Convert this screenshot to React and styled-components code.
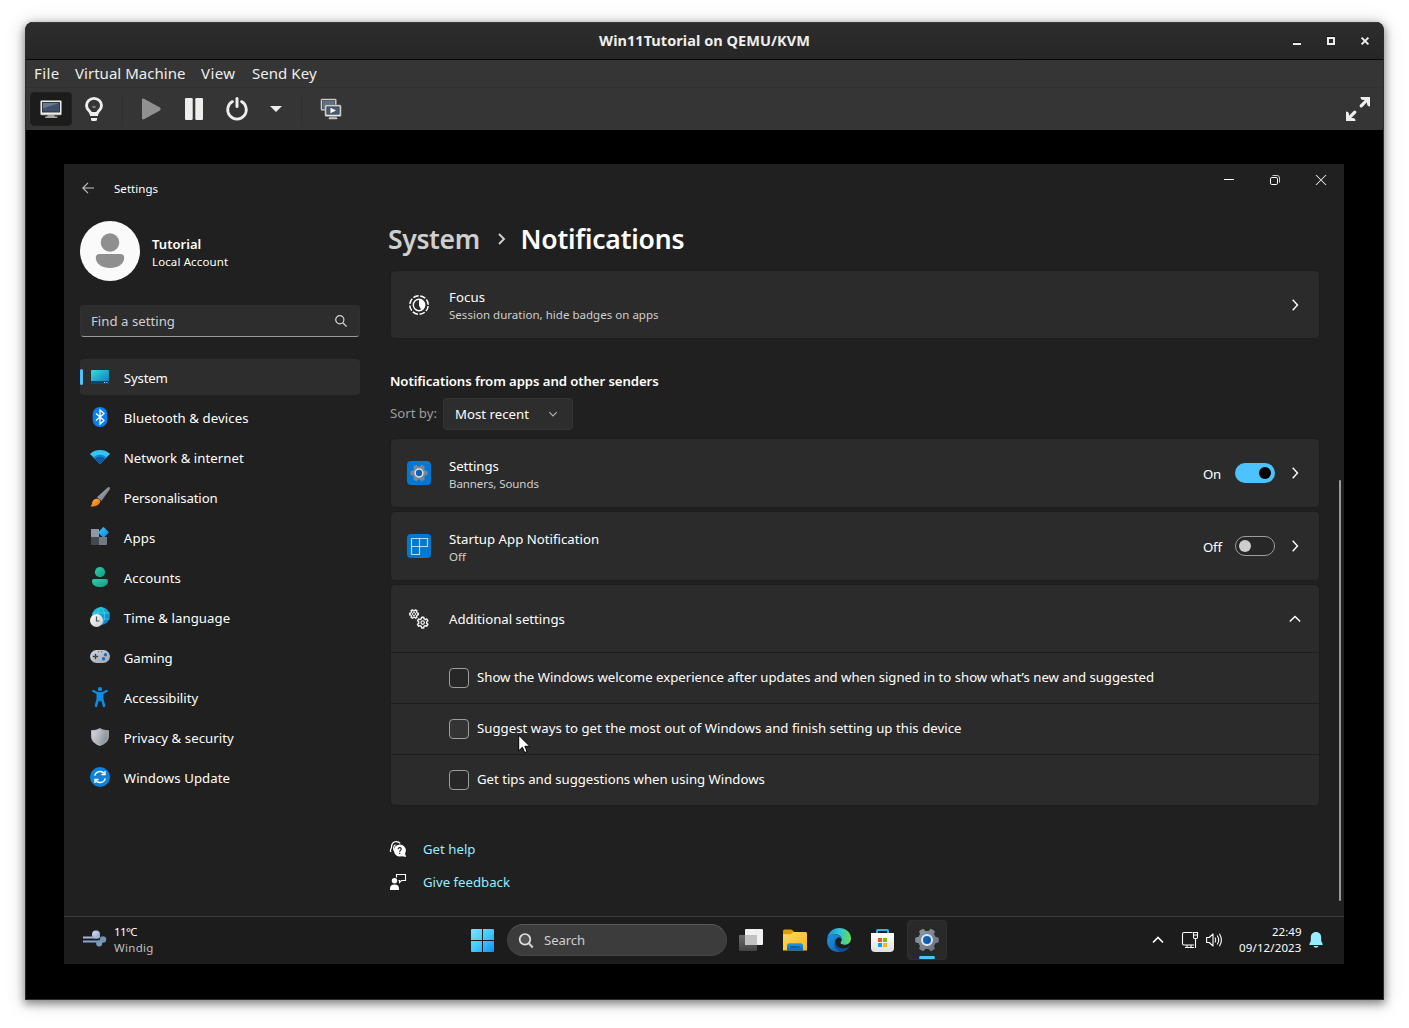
import React from "react";
import styled, { createGlobalStyle, css } from "styled-components";

const Global = createGlobalStyle`
  * { box-sizing: border-box; }
  html, body { margin: 0; background: #fff; }
  body { font-family: "Noto Sans", "Open Sans", sans-serif; overflow: hidden; }
  svg { display: block; flex: none; overflow: visible; }
`;

/* ---------- text ---------- */

const Text = styled.span`
  display: block;
  white-space: nowrap;
  font-size: ${(p) => p.$size || 13.2}px;
  line-height: ${(p) => p.$line || 20}px;
  font-weight: ${(p) => p.$weight || 400};
  letter-spacing: ${(p) => p.$track || 0}px;
  color: ${(p) => p.$color || "#fff"};
`;

/* ---------- host window ---------- */

const Page = styled.div`
  width: 1409px;
  height: 1028px;
  padding: 22px 25px 28px;
  background: #fff;
`;

const HostWindow = styled.div`
  width: 1359px;
  height: 978px;
  display: flex;
  flex-direction: column;
  background: #000;
  border: 1px solid #2b2d2d;
  border-top: 0;
  border-radius: 8px 8px 0 0;
  overflow: hidden;
  box-shadow: 0 3px 9px 1px rgba(0, 0, 0, 0.42), 0 2px 20px 2px rgba(0, 0, 0, 0.13);
`;

const HostTitlebar = styled.header`
  height: 38px;
  flex: none;
  display: grid;
  grid-template-columns: 1fr auto 1fr;
  align-items: center;
  background: linear-gradient(#2d2d2d, #262626);
  box-shadow: inset 0 1px #3a3a3a;
  border-bottom: 1px solid #070707;
`;

const HostTitle = styled(Text)`
  padding-bottom: 1px;
`;

const HostControls = styled.div`
  display: flex;
  justify-content: flex-end;
  gap: 20px;
  padding-right: 11px;
`;

const MenuBar = styled.nav`
  height: 28px;
  flex: none;
  display: flex;
  align-items: center;
  padding: 0 0 1px 8px;
  background: #353535;
  border-bottom: 1px solid #303030;
`;

const MenuItem = styled(Text)`
  width: ${(p) => p.$width}px;
`;

const HostToolbar = styled.div`
  height: 42px;
  flex: none;
  display: flex;
  align-items: center;
  padding: 0 9px 0 4px;
  background: #353535;
`;

const ToolButton = styled.div`
  width: ${(p) => p.$width || 42}px;
  height: 34px;
  flex: none;
  display: grid;
  place-items: center;
  border-radius: 5px;
  background: ${(p) => (p.$pressed ? "#1c1c1c" : "transparent")};
  box-shadow: ${(p) => (p.$pressed ? "inset 0 0 0 1px #202020" : "none")};
`;

const ToolDivider = styled.div`
  width: 1px;
  height: 34px;
  margin: 0 ${(p) => p.$right}px 0 ${(p) => p.$left}px;
  background: #2f2f2f;
`;

const Grow = styled.div`
  flex: 1;
`;

const Viewport = styled.div`
  flex: 1;
  padding: 34px 38px 35px;
  background: #000;
`;

/* ---------- guest desktop ---------- */

const Desktop = styled.div`
  width: 1280px;
  height: 800px;
  display: flex;
  flex-direction: column;
  background: #202020;
`;

const SettingsWindow = styled.div`
  height: 752px;
  display: flex;
  flex-direction: column;
`;

const AppTitlebar = styled.header`
  height: 48px;
  flex: none;
  display: flex;
  align-items: flex-start;
`;

const AppTitle = styled.div`
  height: 48px;
  display: flex;
  align-items: center;
  gap: 20px;
  padding-left: 18px;
  flex: 1;
`;

const AppName = styled(Text)`
  padding-top: 2px;
`;

const CaptionButton = styled.div`
  width: 46px;
  height: 32px;
  display: grid;
  place-items: center;
`;

const Body = styled.div`
  flex: 1;
  display: flex;
  min-height: 0;
`;

const Sidebar = styled.aside`
  width: 296px;
  flex: none;
  padding: 9px 0 0 16px;
`;

const Profile = styled.div`
  display: flex;
  align-items: center;
  gap: 12px;
  height: 60px;
`;

const ProfileText = styled.div`
  display: flex;
  flex-direction: column;
  padding-top: 4px;
`;

const SearchField = styled.div`
  height: 32px;
  margin-top: 24px;
  padding: 0 12px 0 10px;
  display: flex;
  align-items: center;
  justify-content: space-between;
  background: #2d2d2d;
  border: 1px solid #303030;
  border-bottom: 1px solid #9a9a9a;
  border-radius: 4px;
`;

const NavList = styled.nav`
  margin-top: 22px;
  display: flex;
  flex-direction: column;
  gap: 4px;
`;

const NavItem = styled.div`
  height: 36px;
  display: flex;
  align-items: center;
  border-radius: 4px;
  background: ${(p) => (p.$active ? "#2d2d2d" : "transparent")};
`;

const NavMarker = styled.div`
  width: 3px;
  height: 16px;
  margin-right: 7px;
  border-radius: 2px;
  background: ${(p) => (p.$active ? "#4cc2ff" : "transparent")};
`;

const NavLabel = styled(Text)`
  padding: 2px 0 0 13.8px;
`;

const Main = styled.main`
  flex: 1;
  display: flex;
  flex-direction: column;
  padding: 9px 0 0 30px;
`;

const Breadcrumb = styled.div`
  height: 36px;
  margin-left: -2px;
  display: flex;
  align-items: center;
`;

const Crumb = styled(Text)`
  width: ${(p) => p.$width}px;
  margin-left: ${(p) => p.$indent || 0}px;
  padding-bottom: 1px;
`;

const Card = styled.section`
  margin-top: ${(p) => p.$gap}px;
  background: #2b2b2b;
  border: 1px solid #1d1d1d;
  border-radius: 5px;
`;

const CardRow = styled.div`
  height: ${(p) => p.$height || 68}px;
  display: flex;
  align-items: center;
  padding: 0 18px 0 16px;
`;

const CardIcon = styled.div`
  width: 24px;
  height: 24px;
  margin-right: 18px;
  display: grid;
  place-items: center;
`;

const CardText = styled.div`
  flex: 1;
  padding-top: ${(p) => p.$shift || 0}px;
`;

const State = styled(Text)`
  width: 32px;
  padding-top: 2px;
`;

const Toggle = styled.div`
  width: 40px;
  height: 20px;
  margin-right: 14px;
  padding: 0 ${(p) => (p.$on ? 4 : 3)}px;
  display: flex;
  align-items: center;
  justify-content: ${(p) => (p.$on ? "flex-end" : "flex-start")};
  border-radius: 10px;
  ${(p) =>
    p.$on
      ? css`
          background: #4cc2ff;
        `
      : css`
          background: #272727;
          border: 1px solid #9d9d9d;
        `}
`;

const Knob = styled.div`
  width: 12px;
  height: 12px;
  border-radius: 50%;
  background: ${(p) => (p.$on ? "#000" : "#cecece")};
`;

const SectionTitle = styled(Text)`
  margin-top: 32px;
`;

const SortRow = styled.div`
  height: 32px;
  margin-top: 7px;
  display: flex;
`;

const SortLabel = styled(Text)`
  width: 53px;
  padding-top: 5px;
`;

const Select = styled.div`
  width: 130px;
  height: 32px;
  padding: 0 13px 0 11px;
  display: flex;
  align-items: center;
  justify-content: space-between;
  background: #2d2d2d;
  border: 1px solid #353535;
  border-radius: 4px;
`;

const OptionRow = styled.div`
  height: 51px;
  display: flex;
  align-items: center;
  gap: 8px;
  padding-left: 58px;
  border-top: 1px solid #1d1d1d;
`;

const Checkbox = styled.div`
  width: 20px;
  height: 20px;
  border: 1px solid #9d9d9d;
  border-radius: 4px;
  background: ${(p) => (p.$hover ? "#343434" : "#272727")};
`;

const OptionText = styled(Text)`
  padding-bottom: 2px;
`;

const Links = styled.div`
  margin-top: 33px;
  display: flex;
  flex-direction: column;
  gap: 13px;
`;

const LinkRow = styled.div`
  height: 20px;
  display: flex;
  align-items: center;
  gap: 17px;
`;

const ScrollGutter = styled.div`
  width: 24px;
  flex: none;
  padding: 268px 0 0 19px;
`;

const ScrollThumb = styled.div`
  width: 2px;
  height: 421px;
  border-radius: 1px;
  background: #9a9a9a;
`;

const Cursor = styled.div`
  position: absolute;
  left: 518px;
  top: 734px;
`;

/* ---------- taskbar ---------- */

const Taskbar = styled.footer`
  height: 48px;
  display: flex;
  align-items: center;
  padding-bottom: 1px;
  background: #1c1c1c;
  border-top: 1px solid #3d3d3d;
`;

const Weather = styled.div`
  width: 407px;
  display: flex;
  align-items: center;
  gap: 7px;
  padding-left: 19px;
`;

const WeatherIcon = styled.div`
  margin-top: -3px;
`;

const SearchPill = styled.div`
  width: 220px;
  height: 32px;
  margin: 0 12px 0 13px;
  display: flex;
  align-items: center;
  gap: 11px;
  padding-left: 11px;
  background: #3c3c3c;
  border: 1px solid #454545;
  border-top-color: #5a5a5a;
  border-radius: 16px;
`;

const Pinned = styled.div`
  display: flex;
  align-items: center;
  gap: 20px;
`;

const RunningApp = styled.div`
  width: 40px;
  height: 40px;
  margin-left: -8px;
  display: flex;
  flex-direction: column;
  align-items: center;
  padding-top: 7px;
  background: #292929;
  border: 1px solid #303030;
  border-radius: 4px;
`;

const RunningMark = styled.div`
  width: 16px;
  height: 3px;
  margin-top: 4px;
  border-radius: 2px;
  background: #4cc2ff;
`;

const Tray = styled.div`
  flex: 1;
  display: flex;
  align-items: center;
  justify-content: flex-end;
  padding-right: 21px;
`;

const TrayIcon = styled.div`
  margin-right: ${(p) => p.$gap}px;
`;

const Clock = styled.div`
  width: 79.5px;
  margin-right: 7.5px;
  display: flex;
  flex-direction: column;
  align-items: flex-end;
`;

/* ---------- icons ---------- */

function gearPath(cx, cy, outer, inner, teeth, tip, root, turn = 0) {
  const step = (Math.PI * 2) / teeth;
  const pts = [];
  for (let i = 0; i < teeth; i++) {
    const a = i * step + turn;
    [
      [inner, -root],
      [outer, -tip],
      [outer, tip],
      [inner, root],
    ].forEach(([r, f]) => pts.push(`${(cx + r * Math.cos(a + f * step)).toFixed(2)} ${(cy + r * Math.sin(a + f * step)).toFixed(2)}`));
  }
  return `M${pts.join("L")}Z`;
}

const Svg = ({ w = 20, h = w, vb, children, ...rest }) => (
  <svg width={w} height={h} viewBox={vb || `0 0 ${w} ${h}`} fill="none" {...rest}>
    {children}
  </svg>
);

const Grad = ({ id, from, to, x2 = 1, y2 = 1 }) => (
  <linearGradient id={id} x1="0" y1="0" x2={x2} y2={y2}>
    <stop stopColor={from} />
    <stop offset="1" stopColor={to} />
  </linearGradient>
);

const HostMinimize = () => (
  <Svg w={14}><path d="M3 9h8v2H3z" fill="#eee" /><path d="M3 8h8v1H3z" fill="#111" /></Svg>
);
const HostMaximize = () => (
  <Svg w={14}><path d="M3 2h8v1H3z" fill="#111" /><path d="M4 4h6v6H4z" stroke="#eee" strokeWidth="2" /></Svg>
);
const HostClose = () => (
  <Svg w={14}><path d="M3.6 3.6l6.8 6.8M10.4 3.6l-6.8 6.8" stroke="#eee" strokeWidth="2" /></Svg>
);

const ConsoleIcon = () => (
  <Svg w={24}>
    <path d="M9 18h6l1.5 2.2h-9z" fill="#a5a5a2" />
    <rect x="6" y="19.500" width="12.5" height="1.6" rx=".8" fill="#a5a5a2" />
    <rect x="1.5" y="3.5" width="21" height="14.500" rx="1.2" fill="#ecece9" stroke="#8c8c89" strokeWidth=".7" />
    <rect x="3.500" y="5.500" width="17" height="9.500" fill="#3f5068" stroke="#252e3b" strokeWidth=".9" />
    <path d="M4 6h16L4 11.500z" fill="#687a92" />
  </Svg>
);
const BulbIcon = () => (
  <Svg w={24}>
    <path d="M8.700 16.500c0-2.300-4.200-3.600-4.200-7.900a7.500 7.200 0 0 1 15 0c0 4.300-4.200 5.600-4.200 7.900z" stroke="#eeeeec" strokeWidth="2.900" strokeLinejoin="round" />
    <path d="M9.500 8.200l1.200 1.300 1.300-.9 1.300.9 1.200-1.300-1.300 2.900h-2.400z" fill="#858585" />
    <path d="M8 17h8v2H8z" fill="#eeeeec" />
    <path d="M9 21h6v1.400q0 1.600-1.600 1.600h-2.800Q9 24 9 22.400z" fill="#eeeeec" />
  </Svg>
);
const PlayIcon = () => (
  <Svg w={20} h={22}><path d="M1 2Q1 0 3 .8L19 9.500Q20.500 11 19 12.500L3 21.200Q1 22 1 20z" fill="#909090" /></Svg>
);
const PauseIcon = () => (
  <Svg w={18} h={22}><rect width="7.700" height="22" rx="1.300" fill="#eeeeec" /><rect x="10.300" width="7.700" height="22" rx="1.300" fill="#eeeeec" /></Svg>
);
const PowerIcon = () => (
  <Svg w={22} h={24}>
    <path d="M6.500 4.600a9.300 9.300 0 1 0 9 0" stroke="#eeeeec" strokeWidth="2.800" strokeLinecap="round" />
    <path d="M11 1.500v8" stroke="#eeeeec" strokeWidth="3" strokeLinecap="round" />
  </Svg>
);
const CaretIcon = () => (
  <Svg w={12} h={6}><path d="M0 0h12L6 6z" fill="#eeeeec" /></Svg>
);
const SnapshotsIcon = () => (
  <Svg w={22}>
    <rect x=".9" y=".9" width="15.500" height="11.500" rx="1" fill="#e4e4e1" stroke="#8a8a88" strokeWidth=".6" />
    <rect x="2.500" y="2.500" width="12.300" height="8.300" fill="#607088" stroke="#303a48" strokeWidth=".7" />
    <path d="M10 18h6l1 2H9z" fill="#9c9c99" />
    <rect x="8.500" y="19.800" width="9" height="1.400" rx=".7" fill="#c8c8c5" />
    <rect x="4.900" y="6.900" width="16.200" height="11.500" rx="1" fill="#eeeeeb" stroke="#777" strokeWidth=".7" />
    <rect x="6.800" y="8.800" width="12.400" height="7.400" fill="#4a5a70" stroke="#2f3946" strokeWidth=".7" />
    <path d="M10.500 9.800l5.500 2.700-5.500 2.700z" fill="#fff" />
  </Svg>
);
const FullscreenIcon = () => (
  <Svg w={24}>
    <path
      d="M14.500 0H24v9.500q-3 0-3-3V5.200l-4.600 4.900q-1.300 1-2.400 0-1-1.200 0-2.400L18.800 3h-1.500q-2.800 0-2.800-3zM9.500 24H0v-9.500q3 0 3 3v1.300l4.600-4.900q1.300-1 2.400 0 1 1.200 0 2.400L5.200 21h1.500q2.800 0 2.800 3z"
      fill="#eeeeec"
    />
  </Svg>
);

const BackIcon = () => (
  <Svg w={12}><path d="M12 6H.8M6 .8L.8 6 6 11.200" stroke="#c4c4c4" strokeWidth="1.100" /></Svg>
);
const MinimizeIcon = () => (<Svg w={10}><path d="M0 4.500h10" stroke="#fff" /></Svg>);
const RestoreIcon = () => (
  <Svg w={10}>
    <rect x=".5" y="2.500" width="7" height="7" rx="1.300" stroke="#fff" />
    <path d="M2.500 .5h4.500q2.500 0 2.500 2.500v4.500" stroke="#ccc" />
  </Svg>
);
const CloseIcon = () => (<Svg w={10}><path d="M0 0l10 10M10 0L0 10" stroke="#e6e6e6" strokeWidth="1.050" /></Svg>);
const Avatar = () => (
  <Svg w={60}>
    <circle cx="30" cy="30" r="30" fill="#fafafa" />
    <circle cx="30" cy="21.500" r="9.300" fill="#8f8f8f" />
    <path d="M19.500 33h21q3.700 0 3.700 3.700c0 6.500-6.500 10.300-14.200 10.300s-14.200-3.800-14.200-10.300q0-3.700 3.700-3.700z" fill="#8f8f8f" />
  </Svg>
);
const Magnifier = () => (
  <Svg w={12}><circle cx="4.800" cy="4.800" r="4.100" stroke="#d6d6d6" strokeWidth="1.200" /><path d="M7.800 7.800l3.800 3.800" stroke="#d6d6d6" strokeWidth="1.300" /></Svg>
);

const SystemIcon = () => (
  <Svg>
    <defs><Grad id="sys" from="#34dbe2" to="#0f74c0" /></defs>
    <rect x="1" y="3" width="18" height="14" rx="1" fill="url(#sys)" />
    <path d="M1 14h18v2q0 1-1 1H2q-1 0-1-1z" fill="#0c4668" />
    <path d="M14 15h1v1h-1zM16.300 15h1v1h-1z" fill="#9fe0f5" />
  </Svg>
);
const BluetoothIcon = () => (
  <Svg>
    <rect x="2.700" y="0" width="14.600" height="20" rx="7" fill="#0a7df2" />
    <path d="M6 6.500l8 7-4 3.500V3l4 3.500-8 7" stroke="#fff" strokeWidth="1.300" />
  </Svg>
);
const NetworkIcon = () => (
  <Svg>
    <path d="M10 17L.3 7.200Q0 6.800.4 6.400C5.700 1.900 14.300 1.900 19.600 6.400q.4.400.1.800z" fill="#32c5f4" />
    <path d="M10 17L3.500 10.300c3.800-3.300 9.200-3.300 13 0z" fill="#1683d8" />
    <path d="M10 17L4.800 11.700c3-2.500 7.400-2.500 10.400 0z" fill="#0c59a4" />
  </Svg>
);
const BrushIcon = () => (
  <Svg>
    <defs><Grad id="br" from="#b9bec4" to="#5e666e" /><Grad id="br2" from="#ffc23a" to="#ec5f12" /></defs>
    <path d="M19.500.3Q20.500 1 19.600 2.500L11.500 14 7 10.300 17.500.7Q18.700-.2 19.500.3z" fill="url(#br)" />
    <path d="M8.300 12c2 .8 2.300 2.600 1.400 4.100C8.300 18.900 4 20.300.3 19.200c1.800-.7 1.500-2.600 2-4 .8-2.800 3.600-4.300 6-3.200z" fill="url(#br2)" />
  </Svg>
);
const AppsIcon = () => (
  <Svg>
    <defs><Grad id="ap" from="#3ccaff" to="#0a7fe0" /></defs>
    <path d="M1 2h8v8H1z" fill="#9198a1" /><path d="M1 10h8v8H2q-1 0-1-1z" fill="#44494f" /><path d="M9 10h8v7q0 1-1 1H9z" fill="#747a84" />
    <path d="M13.900.2l4.700 4.800q.4.400 0 .8l-4.700 4.800q-.4.400-.8 0L8.400 5.800q-.4-.4 0-.8L13.100.2q.4-.4.8 0z" fill="url(#ap)" />
  </Svg>
);
const AccountIcon = () => (
  <Svg>
    <defs><Grad id="ac" from="#2bd0b0" to="#119c7f" /></defs>
    <circle cx="10" cy="5.200" r="5.100" fill="url(#ac)" />
    <path d="M4 12h12q2 0 2 2c0 4-3.500 6-8 6s-8-2-8-6q0-2 2-2z" fill="url(#ac)" />
  </Svg>
);
const TimeIcon = () => (
  <Svg>
    <defs><Grad id="ti" from="#25d4da" to="#0873cc" /><Grad id="ti2" from="#fff" to="#c9cacc" /></defs>
    <circle cx="11" cy="9" r="9" fill="url(#ti)" />
    <path d="M2.500 6h17M2.500 12h17M11 0c-5 5-5 13 0 18M11 0c5 5 5 13 0 18" stroke="#50e0f2" strokeWidth=".9" opacity=".65" />
    <circle cx="6.500" cy="13.500" r="6.500" fill="url(#ti2)" />
    <path d="M6.500 9.500v4.500h3" stroke="#505050" strokeWidth="1.200" />
  </Svg>
);
const GamingIcon = () => (
  <Svg>
    <defs><Grad id="ga" from="#d4d8df" to="#9ca2ab" /></defs>
    <rect x="0" y="3" width="20" height="13" rx="6.500" fill="url(#ga)" />
    <path d="M5.500 6.800v5.400M2.800 9.500h5.400" stroke="#3c4045" strokeWidth="1.300" />
    <path d="M8 4.200h1.200v1H8zM11 4.200h1.200v1H11z" fill="#505a64" />
    <circle cx="15.500" cy="7.800" r="1.700" fill="#0b71cf" /><circle cx="13.500" cy="11.700" r="1.700" fill="#0b71cf" />
  </Svg>
);
const AccessibilityIcon = () => (
  <Svg>
    <g stroke="#0f8be0" strokeLinecap="round" strokeLinejoin="round">
      <circle cx="10" cy="2.200" r="2.100" fill="#0f8be0" stroke="none" />
      <path d="M3.200 3.900L7.800 6.200h4.400l4.600-2.300" strokeWidth="2.200" />
      <path d="M7.800 6v6.200L6 18.800M12.200 6v6.200l1.800 6.600" strokeWidth="2.600" />
      <path d="M8 6h4v7l-2 1-2-1z" fill="#0f8be0" strokeWidth="1" />
    </g>
  </Svg>
);
const ShieldIcon = () => (
  <Svg>
    <defs><Grad id="sh" from="#d5d8dc" to="#a2a7ae" /><Grad id="sh2" from="#b9bdc3" to="#7d838b" /></defs>
    <path d="M10 1C7.500 2.700 4.500 3.200 1 3.200V9c0 5 4 8.200 9 10z" fill="#b9bdc3" />
    <path d="M10 1c2.500 1.700 5.500 2.200 9 2.200V9c0 5-4 8.200-9 10z" fill="#9ba0a8" />
    <path d="M10 2.500C8 3.800 5.500 4.300 2.500 4.400V9c0 4 3.300 6.800 7.500 8.500z" fill="url(#sh)" />
    <path d="M10 2.500c2 1.300 4.500 1.800 7.500 1.900V9c0 4-3.300 6.800-7.500 8.500z" fill="url(#sh2)" />
  </Svg>
);
const UpdateIcon = () => (
  <Svg>
    <circle cx="10" cy="10" r="10" fill="#0b82dc" />
    <path d="M4.700 8.700a5.500 5.500 0 0 1 9.600-2.200M15.300 11.300a5.500 5.500 0 0 1-9.600 2.200" stroke="#fff" strokeWidth="1.400" />
    <path d="M15 4v3.500h-3.600M5 16v-3.500h3.600" stroke="#fff" strokeWidth="1.400" />
  </Svg>
);

const Chevron = ({ dir }) => {
  const d = {
    right: "M3.700 .8L8.500 6 3.700 11.200",
    up: "M.8 8.600L6 3.400l5.200 5.200",
    down: "M2.300 4.200L6 7.900l3.700-3.700",
  }[dir];
  return <Svg w={12}><path d={d} stroke={dir === "down" ? "#b5b5b5" : "#fff"} strokeWidth={dir === "down" ? 1.1 : 1.4} /></Svg>;
};
const CrumbChevron = () => (<Svg w={8} h={12}><path d="M1 1l5 5-5 5" stroke="#cfcfcf" strokeWidth="1.900" /></Svg>);

const FocusIcon = () => (
  <Svg>
    <circle cx="10" cy="10" r="9.200" stroke="#fff" strokeWidth="1.500" strokeDasharray="5.600 1.625" strokeDashoffset="-1" />
    <circle cx="10" cy="10" r="5.700" stroke="#fff" strokeWidth="1.400" />
    <path d="M10 4.500v6l2.300 4.500a5.500 5.500 0 0 0-2.300-10.500z" fill="#fff" />
  </Svg>
);
const GearGlyph = ({ w }) => (
  <Svg w={w} vb="0 0 24 24">
    <defs><Grad id="gr" from="#8e9aa5" to="#67717b" /><Grad id="gb" from="#0b6cc8" to="#0a539e" /></defs>
    <path d={gearPath(12, 12, 11, 8.3, 6, 0.15, 0.27)} fill="url(#gr)" stroke="url(#gr)" strokeWidth="1.800" strokeLinejoin="round" />
    <circle cx="12" cy="12" r="5" fill="url(#gb)" stroke="#e2e6ea" strokeWidth="2" />
  </Svg>
);
const SettingsTile = () => (
  <Svg w={24}>
    <rect width="24" height="24" rx="4" fill="#0078d4" />
    <path d={gearPath(12, 12, 8, 6, 6, 0.15, 0.27)} fill="#7d8791" stroke="#7d8791" strokeWidth="1.500" strokeLinejoin="round" />
    <circle cx="12" cy="12" r="3.900" fill="#0d62b4" stroke="#dbe2e8" strokeWidth="1.500" />
  </Svg>
);
const StartupTile = () => (
  <Svg w={24}>
    <rect width="24" height="24" rx="4" fill="#0078d4" />
    <path d="M4.500 4.500h16v8h-8v8h-8zM12.500 4.500v8M4.500 12.500h8" stroke="#b8daf5" strokeWidth="1.200" strokeLinejoin="round" />
  </Svg>
);
const GearsIcon = () => (
  <Svg>
    <path d={gearPath(5, 5, 4.4, 3.3, 6, 0.2, 0.3, 0)} stroke="#eee" strokeWidth="1.400" strokeLinejoin="round" />
    <circle cx="5" cy="5" r="1.500" stroke="#eee" strokeWidth="1" />
    <path d={gearPath(13.7, 13.6, 5.500, 4.100, 6, 0.18, 0.3, Math.PI / 6)} stroke="#eee" strokeWidth="1.500" strokeLinejoin="round" />
    <circle cx="13.700" cy="13.600" r="1.700" stroke="#eee" strokeWidth="1.200" />
  </Svg>
);
const HelpIcon = () => (
  <Svg w={16}>
    <path d="M1.300 10.500Q0 10.500.5 9L1.500 6.500C1.500 2.700 3.500.6 6.200.6c1.800 0 3 .6 4 1.800" stroke="#fff" strokeWidth="1.200" />
    <path d="M3.700 9.500V6.300Q4 4.300 5.500 3.700" stroke="#fff" strokeWidth="1.100" />
    <path d="M9.800 3.500a6 6 0 1 1-1 11.900 6 6 0 0 1 1-11.900z" fill="#fff" />
    <path d="M11 15l5 1-1.300-5z" fill="#fff" />
    <path d="M8 8.200q.2-1.600 1.700-1.600t1.600 1.400c0 1.300-1.600 1.300-1.600 2.700M9.700 11.700v1.200" stroke="#202020" strokeWidth="1.100" />
  </Svg>
);
const FeedbackIcon = () => (
  <Svg w={16}>
    <circle cx="4.500" cy="6.800" r="2.700" fill="#fff" />
    <path d="M0 16v-1.500Q0 10.500 4.500 10.500T9 14.500V16z" fill="#fff" />
    <path d="M6.500 3.500v-3h9v6h-4l-2 2v-2H8.500" stroke="#fff" strokeWidth="1.100" />
  </Svg>
);
const PointerIcon = () => (
  <Svg w={13} h={20}>
    <path d="M.7 1.200v15.600l3.700-3.500 2.300 5.300 2.400-1-2.200-5.300h4.900z" fill="#fff" stroke="#000" strokeWidth="1" />
  </Svg>
);

const WindIcon = () => (
  <Svg w={24} h={18}>
    <defs><Grad id="wd" from="#d6e2f6" to="#86a5d2" /></defs>
    <circle cx="13" cy="4.500" r="4" fill="url(#wd)" />
    <path d="M0 6.500h14q3 0 3-2v2.500q-.5 1.500-2.500 1.500H0z" fill="#a3b8dc" />
    <path d="M0 10.500h15.500q2 0 2.500-1.500l1 3q-1 .5-3 .5H0z" fill="#86a4cf" />
    <circle cx="20" cy="9.500" r="3.200" fill="#7292b2" />
    <circle cx="16.200" cy="13.500" r="3" fill="#7a9abb" />
  </Svg>
);
const StartIcon = () => (
  <Svg w={23}>
    <defs><linearGradient id="st" gradientUnits="userSpaceOnUse" x1="0" y1="0" x2="23" y2="23"><stop stopColor="#83e0fb" /><stop offset=".5" stopColor="#43c9fd" /><stop offset="1" stopColor="#0b92f5" /></linearGradient></defs>
    <path d="M0 1q0-1 1-1h10v11H0zM12 0h10q1 0 1 1v10H12zM0 12h11v11H1q-1 0-1-1zM12 12h11v10q0 1-1 1H12z" fill="url(#st)" />
  </Svg>
);
const PillMagnifier = () => (
  <Svg w={14} h={15}><circle cx="6" cy="6.300" r="5.300" fill="#555" stroke="#e2e2e2" strokeWidth="1.700" /><path d="M9.800 10.200l4 4.300" stroke="#d0d0d0" strokeWidth="2" /></Svg>
);
const TaskViewIcon = () => (
  <Svg w={24} h={24}>
    <defs><Grad id="tv" from="#6d6d6d" to="#434343" x2={0} /></defs>
    <rect x="6" y="1" width="18" height="16" rx="1" fill="#f1f1f1" />
    <rect x="0" y="7" width="18" height="16" rx="1" fill="url(#tv)" />
    <path d="M6 7h12v10H6z" fill="#c1c1c1" />
  </Svg>
);
const FolderIcon = () => (
  <Svg w={24} h={24}>
    <defs><Grad id="fo" from="#ffdb66" to="#f9b616" /><Grad id="fo2" from="#2497e8" to="#0967b5" x2={0} /></defs>
    <path d="M0 3q0-1.500 1.500-1.500h6.200q1 0 1.800.8L11 3.800V9H0z" fill="#df9b0b" />
    <path d="M0 6.200h8L10.500 4H22.500Q24 4 24 5.500V22.500H0z" fill="url(#fo)" />
    <path d="M4 22.500V18q0-2.700 2.700-2.700h10.600q2.700 0 2.700 2.700v4.500z" fill="url(#fo2)" />
    <path d="M7.500 19h9" stroke="#0a4f8d" strokeWidth="1.200" />
  </Svg>
);
const EdgeIcon = () => (
  <Svg w={24}>
    <defs>
      <linearGradient id="e1" x1="0" y1=".4" x2="1" y2=".5"><stop stopColor="#1792d8" /><stop offset=".5" stopColor="#2fc3d8" /><stop offset="1" stopColor="#66dd52" /></linearGradient>
      <Grad id="e2" from="#1d99de" to="#0f5cb4" />
    </defs>
    <path d="M.2 10.500C1 4.500 6 0 12.200 0 19 0 24 4.700 24 10.400c0 3.700-2.700 6.300-6.300 6.300-2.800 0-4.200-1.100-4.200-2 0-.8 1.200-1.300 1.200-3.300 0-2.800-2.600-5.200-6.200-5.200C4.400 6.200 1.500 8 .2 10.500z" fill="url(#e1)" />
    <path d="M.1 11.500C.9 8.300 4 6.200 8 6.200c3.800 0 6.500 2.200 6.700 4.900-1-1.300-2.200-1.800-3.200-1.600C8.500 10.500 7.500 13 8 16c.7 4.300 4.200 7 7 7.500C7 26-1 19.800.1 11.500z" fill="url(#e2)" />
    <path d="M9 12c-1.800 4 1.800 8.500 7 8.500 2.800 0 4.700-1 6-2 .4-.2.700 0 .4.500C20.600 22 17 24.200 13.200 24 8 22 6 16 9 12z" fill="#104b9c" />
  </Svg>
);
const StoreIcon = () => (
  <Svg w={24}>
    <defs><Grad id="so" from="#fff" to="#dfdfdf" x2={0} /></defs>
    <path d="M6 6V2.800Q6 2 6.800 2h9.400q.8 0 .8.800V6" stroke="#25b4ef" strokeWidth="2" />
    <path d="M0 5h23v15q0 4-4 4H4q-4 0-4-4z" fill="url(#so)" />
    <path d="M7 10h4v4H7z" fill="#f1511b" /><path d="M12 10h4v4h-4z" fill="#80bb0a" /><path d="M7 15h4v4H7z" fill="#00a3ee" /><path d="M12 15h4v4h-4z" fill="#fbb80b" />
  </Svg>
);
const TrayChevron = () => (<Svg w={12} h={8}><path d="M1 6.500l5-5 5 5" stroke="#fff" strokeWidth="1.600" /></Svg>);
const EthernetIcon = () => (
  <Svg w={16}>
    <path d="M10.500 .5H2Q.5 .5 .5 2v9.500Q.5 13 2 13h10M5 13v2.500M9 13v2.500M3 15.500h9M13.500 6v10" stroke="#fff" strokeWidth="1.100" />
    <path d="M11.500 .5h4v4.500q0 1.500-1 1.500h-2q-1 0-1-1.500zM11.500 3h4" stroke="#fff" strokeWidth="1.100" />
  </Svg>
);
const SpeakerIcon = () => (
  <Svg w={16}>
    <path d="M.6 5.500h2.600L7 2v12L3.200 10.500H.6z" stroke="#fff" strokeWidth="1.100" strokeLinejoin="round" />
    <path d="M9 5.500q1.500 2.500 0 5M11.200 3.500q3 4.500 0 9M13.400 1.700q4 6.300 0 12.600" stroke="#fff" strokeWidth="1.100" />
  </Svg>
);
const BellIcon = () => (
  <Svg w={14} h={16}>
    <path d="M7 0c3.200 0 5.200 2.300 5.200 5.200V9l1.500 3q.3 1-.7 1H1q-1 0-.7-1l1.500-3V5.200C1.800 2.300 3.800 0 7 0zM4.500 14h5q-.5 1.700-2.500 1.700T4.500 14z" fill="#99ebff" />
  </Svg>
);

/* ---------- content ---------- */

const NAV = [
  { label: "System", icon: SystemIcon, track: -0.15, active: true },
  { label: "Bluetooth & devices", icon: BluetoothIcon, track: 0.09 },
  { label: "Network & internet", icon: NetworkIcon, track: 0.05 },
  { label: "Personalisation", icon: BrushIcon, track: -0.12 },
  { label: "Apps", icon: AppsIcon, track: 0.2 },
  { label: "Accounts", icon: AccountIcon, track: 0.1 },
  { label: "Time & language", icon: TimeIcon, track: 0.09 },
  { label: "Gaming", icon: GamingIcon, track: -0.03 },
  { label: "Accessibility", icon: AccessibilityIcon, track: 0 },
  { label: "Privacy & security", icon: ShieldIcon, track: 0.05 },
  { label: "Windows Update", icon: UpdateIcon, track: 0.08 },
];

const MENUS = [
  { label: "File", width: 41, track: 0.4 },
  { label: "Virtual Machine", width: 126, track: 0.03 },
  { label: "View", width: 51, track: 0.4 },
  { label: "Send Key", width: 80, track: 0.05 },
];

const SENDERS = [
  { name: "Settings", detail: "Banners, Sounds", icon: SettingsTile, on: true, track: -0.05, detailTrack: -0.08, gap: 8 },
  { name: "Startup App Notification", detail: "Off", icon: StartupTile, on: false, track: 0.03, detailTrack: 0, gap: 3 },
];

const OPTIONS = [
  { label: "Show the Windows welcome experience after updates and when signed in to show what’s new and suggested", track: -0.003 },
  { label: "Suggest ways to get the most out of Windows and finish setting up this device", track: 0.032, hover: true },
  { label: "Get tips and suggestions when using Windows", track: -0.01 },
];

function HostChrome() {
  return (
    <>
      <HostTitlebar>
        <span />
        <HostTitle $size={14.5} $weight={700} $track={0.05} $color="#eeeeec">Win11Tutorial on QEMU/KVM</HostTitle>
        <HostControls><HostMinimize /><HostMaximize /><HostClose /></HostControls>
      </HostTitlebar>
      <MenuBar>
        {MENUS.map((m) => (
          <MenuItem key={m.label} $size={15} $width={m.width} $track={m.track} $color="#eeeeec">{m.label}</MenuItem>
        ))}
      </MenuBar>
      <HostToolbar>
        <ToolButton $pressed><ConsoleIcon /></ToolButton>
        <ToolButton $width={44}><BulbIcon /></ToolButton>
        <ToolDivider $left={6} $right={7} />
        <ToolButton><PlayIcon /></ToolButton>
        <ToolButton $width={44}><PauseIcon /></ToolButton>
        <ToolButton><PowerIcon /></ToolButton>
        <ToolButton $width={36}><CaretIcon /></ToolButton>
        <ToolDivider $left={7} $right={8} />
        <ToolButton><SnapshotsIcon /></ToolButton>
        <Grow />
        <ToolButton $width={32}><FullscreenIcon /></ToolButton>
      </HostToolbar>
    </>
  );
}

function SettingsSidebar() {
  return (
    <Sidebar>
      <Profile>
        <Avatar />
        <ProfileText>
          <Text $size={13} $weight={600} $track={0.05} $line={18}>Tutorial</Text>
          <Text $size={11.5} $track={0.12} $line={18}>Local Account</Text>
        </ProfileText>
      </Profile>
      <SearchField>
        <Text $color="#cfcfcf" $track={0.02}>Find a setting</Text>
        <Magnifier />
      </SearchField>
      <NavList>
        {NAV.map(({ label, icon: Icon, track, active }) => (
          <NavItem key={label} $active={active}>
            <NavMarker $active={active} />
            <Icon />
            <NavLabel $track={track}>{label}</NavLabel>
          </NavItem>
        ))}
      </NavList>
    </Sidebar>
  );
}

function NotificationsPage() {
  return (
    <Main>
      <Breadcrumb>
        <Crumb $size={26.5} $weight={600} $line={36} $track={-0.35} $width={110} $color="#cfcfcf">System</Crumb>
        <CrumbChevron />
        <Crumb $size={26.5} $weight={600} $line={36} $track={-0.2} $indent={14.5}>Notifications</Crumb>
      </Breadcrumb>
      <Card $gap={13}>
        <CardRow $height={67}>
          <CardIcon><FocusIcon /></CardIcon>
          <CardText>
            <Text $track={0.12}>Focus</Text>
            <Text $size={11.5} $line={16} $track={0.025} $color="#cfcfcf">Session duration, hide badges on apps</Text>
          </CardText>
          <Chevron dir="right" />
        </CardRow>
      </Card>
      <SectionTitle $weight={600} $track={-0.09}>Notifications from apps and other senders</SectionTitle>
      <SortRow>
        <SortLabel $color="#9d9d9d" $track={0}>Sort by:</SortLabel>
        <Select>
          <Text $track={0.02}>Most recent</Text>
          <Chevron dir="down" />
        </Select>
      </SortRow>
      {SENDERS.map(({ name, detail, icon: Icon, on, track, detailTrack, gap }) => (
        <Card key={name} $gap={gap}>
          <CardRow>
            <CardIcon><Icon /></CardIcon>
            <CardText $shift={2}>
              <Text $track={track}>{name}</Text>
              <Text $size={11.5} $line={16} $track={detailTrack} $color="#cfcfcf">{detail}</Text>
            </CardText>
            <State $track={-0.2}>{on ? "On" : "Off"}</State>
            <Toggle $on={on}><Knob $on={on} /></Toggle>
            <Chevron dir="right" />
          </CardRow>
        </Card>
      ))}
      <Card $gap={3}>
        <CardRow $height={67}>
          <CardIcon><GearsIcon /></CardIcon>
          <CardText $shift={1}><Text>Additional settings</Text></CardText>
          <Chevron dir="up" />
        </CardRow>
        {OPTIONS.map(({ label, track, hover }) => (
          <OptionRow key={label}>
            <Checkbox $hover={hover} />
            <OptionText $track={track}>{label}</OptionText>
          </OptionRow>
        ))}
      </Card>
      <Links>
        <LinkRow><HelpIcon /><Text $color="#99ebff" $track={0.02}>Get help</Text></LinkRow>
        <LinkRow><FeedbackIcon /><Text $color="#99ebff">Give feedback</Text></LinkRow>
      </Links>
    </Main>
  );
}

function WindowsTaskbar() {
  return (
    <Taskbar>
      <Weather>
        <WeatherIcon><WindIcon /></WeatherIcon>
        <div>
          <Text $size={11.5} $line={16} $track={-0.6}>11°C</Text>
          <Text $size={11.5} $line={16} $track={0.3} $color="#c0c0c0">Windig</Text>
        </div>
      </Weather>
      <StartIcon />
      <SearchPill>
        <PillMagnifier />
        <Text $color="#cfcfcf" $track={-0.1}>Search</Text>
      </SearchPill>
      <Pinned>
        <TaskViewIcon /><FolderIcon /><EdgeIcon /><StoreIcon />
        <RunningApp><GearGlyph w={24} /><RunningMark /></RunningApp>
      </Pinned>
      <Tray>
        <TrayIcon $gap={18}><TrayChevron /></TrayIcon>
        <TrayIcon $gap={8}><EthernetIcon /></TrayIcon>
        <SpeakerIcon />
        <Clock>
          <Text $size={11.5} $line={16} $track={0.04}>22:49</Text>
          <Text $size={11.5} $line={16} $track={0.12}>09/12/2023</Text>
        </Clock>
        <BellIcon />
      </Tray>
    </Taskbar>
  );
}

export default function App() {
  return (
    <Page>
      <Global />
      <HostWindow>
        <HostChrome />
        <Viewport>
          <Desktop>
            <SettingsWindow>
              <AppTitlebar>
                <AppTitle>
                  <BackIcon />
                  <AppName $size={11.5} $track={0.05}>Settings</AppName>
                </AppTitle>
                <CaptionButton><MinimizeIcon /></CaptionButton>
                <CaptionButton><RestoreIcon /></CaptionButton>
                <CaptionButton><CloseIcon /></CaptionButton>
              </AppTitlebar>
              <Body>
                <SettingsSidebar />
                <NotificationsPage />
                <ScrollGutter><ScrollThumb /></ScrollGutter>
              </Body>
            </SettingsWindow>
            <WindowsTaskbar />
          </Desktop>
        </Viewport>
      </HostWindow>
      <Cursor><PointerIcon /></Cursor>
    </Page>
  );
}
